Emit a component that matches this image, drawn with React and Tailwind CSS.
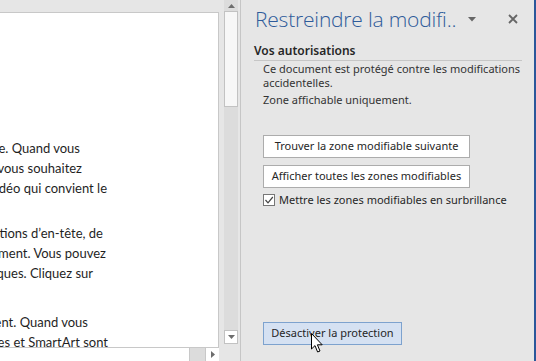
import React from 'react';

const docLines = [
    { w: 'w-[80px]', text: 'La vidéo fournit un moyen puissant de vous aider à prouver votre point de vue. Quand vous', mt: 'mt-[125px]' },
    { w: 'w-[82px]', text: 'cliquez sur Vidéo en ligne, vous pouvez coller le code de la vidéo que vous souhaitez', mt: '' },
    { w: 'w-[107px]', text: 'ajouter. Vous pouvez également taper un mot-clé pour rechercher en ligne la vidéo qui convient le', mt: '' },
    { w: 'w-[103px]', text: 'Pour donner à votre document un aspect professionnel, Word fournit des conceptions d’en-tête, de', mt: 'mt-[25px]' },
    { w: 'w-[106px]', text: 'pied de page, de page de garde et de zone de texte qui se complètent mutuellement. Vous pouvez', mt: '' },
    { w: 'w-[93px]', text: 'par exemple ajouter une page de garde, un en-tête et une barre latérale identiques. Cliquez sur', mt: '' },
    { w: 'w-[88px]', text: 'Les thèmes et les styles vous permettent de garder la cohérence de votre document. Quand vous', mt: 'mt-[29px]' },
    { w: 'w-[108px]', text: 'cliquez sur Création et choisissez un nouveau thème, les images, graphiques et SmartArt sont', mt: '' },
];

const Tri = ({ dir }) => {
    const pts = {
        up: '0,4 3.5,0 7,4',
        down: '0,0 7,0 3.5,4',
        right: '0,0 4,3.5 0,7',
    }[dir];
    const size = dir === 'right' ? [4, 7] : [7, 4];
    return (
        <svg width={size[0]} height={size[1]} viewBox={`0 0 ${size[0]} ${size[1]}`}>
            <polygon points={pts} fill="#6d6d6d" />
        </svg>
    );
};

const PanelButton = ({ children, className = '' }) => (
    <div className={`h-[23px] border flex items-center justify-center text-[11px] text-[#262626] whitespace-nowrap ${className}`}>
        {children}
    </div>
);

export default function App() {
    return (
        <div
            className="w-[536px] h-[361px] flex overflow-hidden bg-[#e6e6e6] relative"
            style={{ fontFamily: '"Noto Sans", sans-serif' }}
        >
            {/* document side */}
            <div className="w-[240px] flex shrink-0">
                <div className="w-[224px] flex flex-col">
                    <div className="h-[12px]" />
                    <div
                        className="w-[219px] h-[335px] bg-white border-t border-r border-[#c8c8c8] overflow-hidden flex flex-col text-[13px] leading-[20px] text-[#1f1f1f]"
                        style={{ fontFamily: 'Lato, "Liberation Sans", sans-serif' }}
                    >
                        {docLines.map((l, i) => (
                            <div key={i} className={`${l.w} ${l.mt} flex justify-end whitespace-nowrap shrink-0`}>
                                <span>{l.text}</span>
                            </div>
                        ))}
                    </div>
                    {/* horizontal scrollbar */}
                    <div className="h-[14px] w-[219px] flex bg-[#dcdcdc] border-t border-[#c8c8c8]">
                        <div className="w-[190px] bg-white border-r border-[#c8c8c8]" />
                        <div className="flex-1" />
                        <div className="w-[14px] bg-white border-l border-[#c8c8c8] flex items-center justify-center">
                            <Tri dir="right" />
                        </div>
                    </div>
                </div>
                {/* vertical scrollbar */}
                <div className="w-[14px] h-[344px] bg-[#dcdcdc] flex flex-col">
                    <div className="h-[11px] flex items-center justify-center">
                        <Tri dir="up" />
                    </div>
                    <div className="h-[96px] bg-[#f7f7f7] border border-[#c2c2c2]" />
                    <div className="flex-1" />
                    <div className="h-[14px] bg-white border border-[#c2c2c2] flex items-center justify-center">
                        <Tri dir="down" />
                    </div>
                </div>
                <div className="w-[2px]" />
            </div>

            {/* task pane */}
            <div className="flex-1 border-l border-[#c6c6c6] flex flex-col">
                <div className="h-[40px] flex items-center pl-[14px] pr-[16px]">
                    <div
                        className="text-[21px] font-light text-[#2e5b9a] whitespace-nowrap tracking-[-0.2px]"
                        style={{ fontFamily: '"Open Sans", Lato, sans-serif' }}
                    >
                        Restreindre la modifi..
                    </div>
                    <svg width="8" height="5" viewBox="0 0 8 5" className="ml-[12px] mt-[-2px]">
                        <polygon points="0,0 8,0 4,4.5" fill="#666" />
                    </svg>
                    <div className="flex-1" />
                    <svg width="10" height="10" viewBox="0 0 10 10" className="mt-[-2px]">
                        <path d="M1 1 L9 9 M9 1 L1 9" stroke="#666" strokeWidth="1.8" />
                    </svg>
                </div>
                <div className="ml-[13px] mr-[12px] mt-[3px] border-b border-[#c6c6c6] pb-[1px]">
                    <div className="text-[12px] font-semibold text-[#262626] leading-[16px]">Vos autorisations</div>
                </div>
                <div className="ml-[22px] mt-[1px] text-[11px] leading-[14px] text-[#333]">
                    <div>Ce document est protégé contre les modifications</div>
                    <div>accidentelles.</div>
                    <div className="mt-[3px]">Zone affichable uniquement.</div>
                </div>
                <div className="ml-[22px] mt-[28px] w-[207px] flex flex-col">
                    <PanelButton className="bg-white border-[#acacac]">Trouver la zone modifiable suivante</PanelButton>
                    <PanelButton className="bg-white border-[#acacac] mt-[7px]">Afficher toutes les zones modifiables</PanelButton>
                </div>
                <div className="ml-[22px] mt-[4px] flex items-center gap-[4px] text-[11px] text-[#262626]">
                    <div className="w-[12px] h-[12px] bg-white border border-[#777] flex items-center justify-center">
                        <svg width="10" height="10" viewBox="0 0 10 10">
                            <path d="M1.5 5 L4 7.8 L8.8 2" stroke="#444" strokeWidth="1.2" fill="none" />
                        </svg>
                    </div>
                    <span>Mettre les zones modifiables en surbrillance</span>
                </div>
                <div className="flex-1" />
                <div className="ml-[22px] mb-[16px] w-[139px]">
                    <PanelButton className="bg-[#d5e1f2] border-[#7da2ce]">Désactiver la protection</PanelButton>
                </div>
            </div>
            <div className="w-[2px] bg-[#2b579a]" />

            {/* mouse cursor */}
            <svg width="13" height="21" viewBox="0 0 13 21" className="absolute left-[311px] top-[333px]">
                <path
                    d="M0.5 0.5 L0.5 16 L4 12.6 L6.6 19 L9 18 L6.4 11.8 L11.2 11.8 Z"
                    fill="white"
                    stroke="black"
                    strokeWidth="1"
                    strokeLinejoin="miter"
                />
            </svg>
        </div>
    );
}
